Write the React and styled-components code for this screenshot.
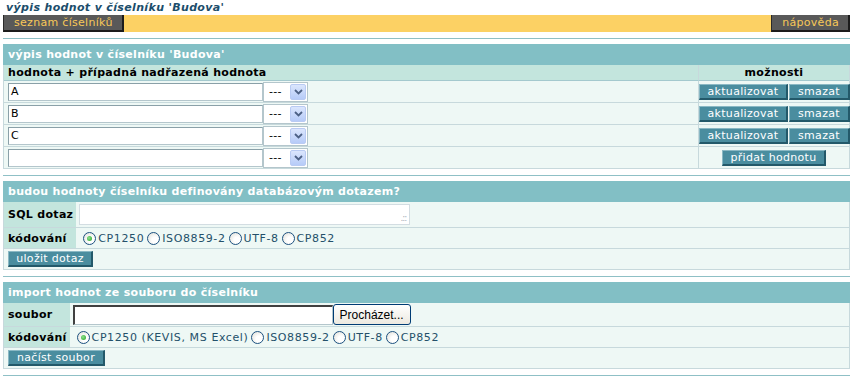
import React from 'react';
import styled, {createGlobalStyle, css} from 'styled-components';

const GlobalStyle = createGlobalStyle`
    body {
        margin: 0;
        background: #fff;
        font-family: Verdana, "DejaVu Sans", sans-serif;
        font-size: 11px;
        letter-spacing: 0.3px;
    }
`;

const values = ['A', 'B', 'C', ''];

const Chevron = () => (
    <svg width="9" height="6" viewBox="0 0 9 6">
        <path d="M1 1 L4.5 4.5 L8 1" fill="none" stroke="#4d6185" strokeWidth="1.8"/>
    </svg>
);

const Select = () => (
    <SelectBox>
        <span>---</span>
        <DropButton><Chevron/></DropButton>
    </SelectBox>
);

const Radio = ({checked, label}) => (
    <RadioLabel>
        <RadioDot checked={checked}/>
        {label}
    </RadioLabel>
);

const Encodings = ({first}) => (
    <RadioGroup>
        <Radio checked label={first}/>
        <Radio label="ISO8859-2"/>
        <Radio label="UTF-8"/>
        <Radio label="CP852"/>
    </RadioGroup>
);

const App = () => {
    return (
        <Page>
            <GlobalStyle/>
            <Title>výpis hodnot v číselníku 'Budova'</Title>
            <TopBar>
                <NavButton>seznam číselníků</NavButton>
                <NavButton>nápověda</NavButton>
            </TopBar>

            <Divider/>
            <Table columns="1fr 151px">
                <Caption>výpis hodnot v číselníku 'Budova'</Caption>
                <HeadCell>hodnota + případná nadřazená hodnota</HeadCell>
                <HeadCell center side>možnosti</HeadCell>
                {values.map((value, i) => (
                    <React.Fragment key={i}>
                        <Cell height={21} pad={4}>
                            <TextInput>{value}</TextInput>
                            <Select/>
                        </Cell>
                        <Cell height={21} side center={value === ''}>
                            {value !== '' ? (
                                <Actions>
                                    <TealButton width={89}>aktualizovat</TealButton>
                                    <TealButton width={61}>smazat</TealButton>
                                </Actions>
                            ) : (
                                <TealButton width={104}>přidat hodnotu</TealButton>
                            )}
                        </Cell>
                    </React.Fragment>
                ))}
            </Table>

            <Divider/>
            <Table columns="max-content 1fr">
                <Caption>budou hodnoty číselníku definovány databázovým dotazem?</Caption>
                <LabelCell height={25}>SQL dotaz</LabelCell>
                <Cell height={25} pad={3}>
                    <TextArea>
                        <Grip>.::</Grip>
                    </TextArea>
                </Cell>
                <LabelCell height={20}>kódování</LabelCell>
                <Cell height={20} pad={7}>
                    <Encodings first="CP1250"/>
                </Cell>
                <Cell height={20} pad={4} wide>
                    <TealButton width={85}>uložit dotaz</TealButton>
                </Cell>
            </Table>

            <Divider/>
            <Table columns="max-content 1fr">
                <Caption>import hodnot ze souboru do číselníku</Caption>
                <LabelCell height={23}>soubor</LabelCell>
                <Cell height={23} pad={3}>
                    <FileInput/>
                    <BrowseButton>Procházet...</BrowseButton>
                </Cell>
                <LabelCell height={20}>kódování</LabelCell>
                <Cell height={20} pad={7}>
                    <Encodings first="CP1250 (KEVIS, MS Excel)"/>
                </Cell>
                <Cell height={20} pad={4} wide>
                    <TealButton width={97}>načíst soubor</TealButton>
                </Cell>
            </Table>
            <Divider/>
        </Page>
    );
};

export default App;

const Page = styled.div`
    padding: 0 3px;
`;

const Title = styled.h1`
    margin: 0;
    padding: 1px 0 0 3px;
    height: 14px;
    line-height: 14px;
    font-size: 11px;
    font-weight: bold;
    font-style: italic;
    letter-spacing: 0.35px;
    color: #1b4d6b;
`;

const TopBar = styled.div`
    display: flex;
    justify-content: space-between;
    height: 17px;
    background: #fcd164;
`;

const NavButton = styled.a`
    display: flex;
    align-items: center;
    box-sizing: border-box;
    height: 17px;
    padding: 0 9px 0 10px;
    background: #595959;
    color: #f7c858;
    border-left: 1px solid #2a2a2a;
    border-right: 2px solid #1c1c1c;
    border-bottom: 2px solid #1c1c1c;
    cursor: pointer;
`;

const Divider = styled.div`
    height: 1px;
    margin: 6px 0 5px;
    background: #8fc0c6;
`;

const Table = styled.div`
    display: grid;
    grid-template-columns: ${props => props.columns};
    background: #eef8f5;
    border-left: 1px solid #c7d9dc;
    border-right: 1px solid #c7d9dc;
`;

const Caption = styled.div`
    grid-column: 1 / -1;
    height: 21px;
    line-height: 21px;
    margin: 0 -1px;
    padding-left: 5px;
    background: #82bfc5;
    color: #fff;
    font-weight: bold;
`;

const HeadCell = styled.div`
    height: 15px;
    line-height: 15px;
    padding-left: 4px;
    background: #c3e5dd;
    color: #000;
    font-weight: bold;
    border-bottom: 1px solid #a4c9ce;
    ${props => props.center && css`
        text-align: center;
        padding-left: 0;
    `}
    ${props => props.side && css`
        border-left: 1px solid #c7d9dc;
    `}
`;

const Cell = styled.div`
    display: flex;
    align-items: center;
    height: ${props => props.height}px;
    padding-left: ${props => props.pad || 0}px;
    border-bottom: 1px solid #c7d9dc;
    ${props => props.side && css`
        border-left: 1px solid #c7d9dc;
    `}
    ${props => props.center && css`
        justify-content: center;
    `}
    ${props => props.wide && css`
        grid-column: 1 / -1;
    `}
`;

const LabelCell = styled.div`
    display: flex;
    align-items: center;
    height: ${props => props.height}px;
    padding: 0 3px 0 4px;
    background: #c3e5dd;
    color: #000;
    font-weight: bold;
    border-bottom: 1px solid #c7d9dc;
`;

const TextInput = styled.div`
    box-sizing: border-box;
    width: 255px;
    height: 18px;
    line-height: 16px;
    padding-left: 2px;
    background: #fff;
    color: #000;
    font-size: 11px;
    border: 1px solid #b4c6cc;
    border-top-color: #8aa0a8;
    border-left-color: #8aa0a8;
`;

const SelectBox = styled.div`
    box-sizing: border-box;
    display: flex;
    align-items: center;
    justify-content: space-between;
    width: 45px;
    height: 20px;
    padding: 0 1px 0 5px;
    background: #fff;
    border: 1px solid #b4c6cc;
    color: #000;
`;

const DropButton = styled.span`
    display: flex;
    align-items: center;
    justify-content: center;
    width: 16px;
    height: 16px;
    border-radius: 2px;
    background: linear-gradient(#dbe6fd, #b6cbf8);
    border: 1px solid #b9cbf3;
    box-sizing: border-box;
`;

const Actions = styled.div`
    display: flex;
    gap: 1px;
    align-self: center;
`;

const TealButton = styled.button`
    box-sizing: border-box;
    width: ${props => props.width}px;
    height: 16px;
    padding: 0;
    font-family: Verdana, "DejaVu Sans", sans-serif;
    font-size: 11px;
    letter-spacing: 0.3px;
    line-height: 14px;
    color: #fff;
    background: #4a8d9f;
    border: 1px solid;
    border-color: #8ab8c4 #23596a #23596a #8ab8c4;
    border-width: 1px 2px 2px 1px;
    cursor: pointer;
`;

const TextArea = styled.div`
    position: relative;
    box-sizing: border-box;
    width: 331px;
    height: 21px;
    background: #fff;
    border: 1px solid #d3dde2;
`;

const Grip = styled.span`
    position: absolute;
    right: 3px;
    bottom: 1px;
    font-size: 9px;
    line-height: 9px;
    color: #a8b0b8;
    letter-spacing: -1px;
`;

const FileInput = styled.div`
    box-sizing: border-box;
    width: 260px;
    height: 20px;
    background: #fff;
    border: 1px solid #b4c6cc;
    border-top: 2px solid #404040;
    border-left: 2px solid #404040;
`;

const BrowseButton = styled.button`
    box-sizing: border-box;
    width: 78px;
    height: 21px;
    padding: 0;
    font-family: "Liberation Sans", Arial, sans-serif;
    font-size: 12px;
    letter-spacing: 0;
    color: #000;
    background: linear-gradient(#ffffff, #ece9e0);
    border: 1px solid #003c74;
    border-radius: 3px;
`;

const RadioGroup = styled.div`
    display: flex;
    align-items: center;
    gap: 3px;
`;

const RadioLabel = styled.label`
    display: flex;
    align-items: center;
    gap: 2px;
    color: #24506a;
    letter-spacing: 0.6px;
`;

const RadioDot = styled.span`
    position: relative;
    box-sizing: border-box;
    width: 13px;
    height: 13px;
    border-radius: 50%;
    border: 1px solid #1c5180;
    background: radial-gradient(circle at 65% 65%, #ffffff 30%, #dcdcd4 100%);
    ${props => props.checked && css`
        &::after {
            content: '';
            position: absolute;
            left: 3px;
            top: 3px;
            width: 5px;
            height: 5px;
            border-radius: 50%;
            background: radial-gradient(circle at 40% 40%, #8ee28e, #21a121);
        }
    `}
`;
